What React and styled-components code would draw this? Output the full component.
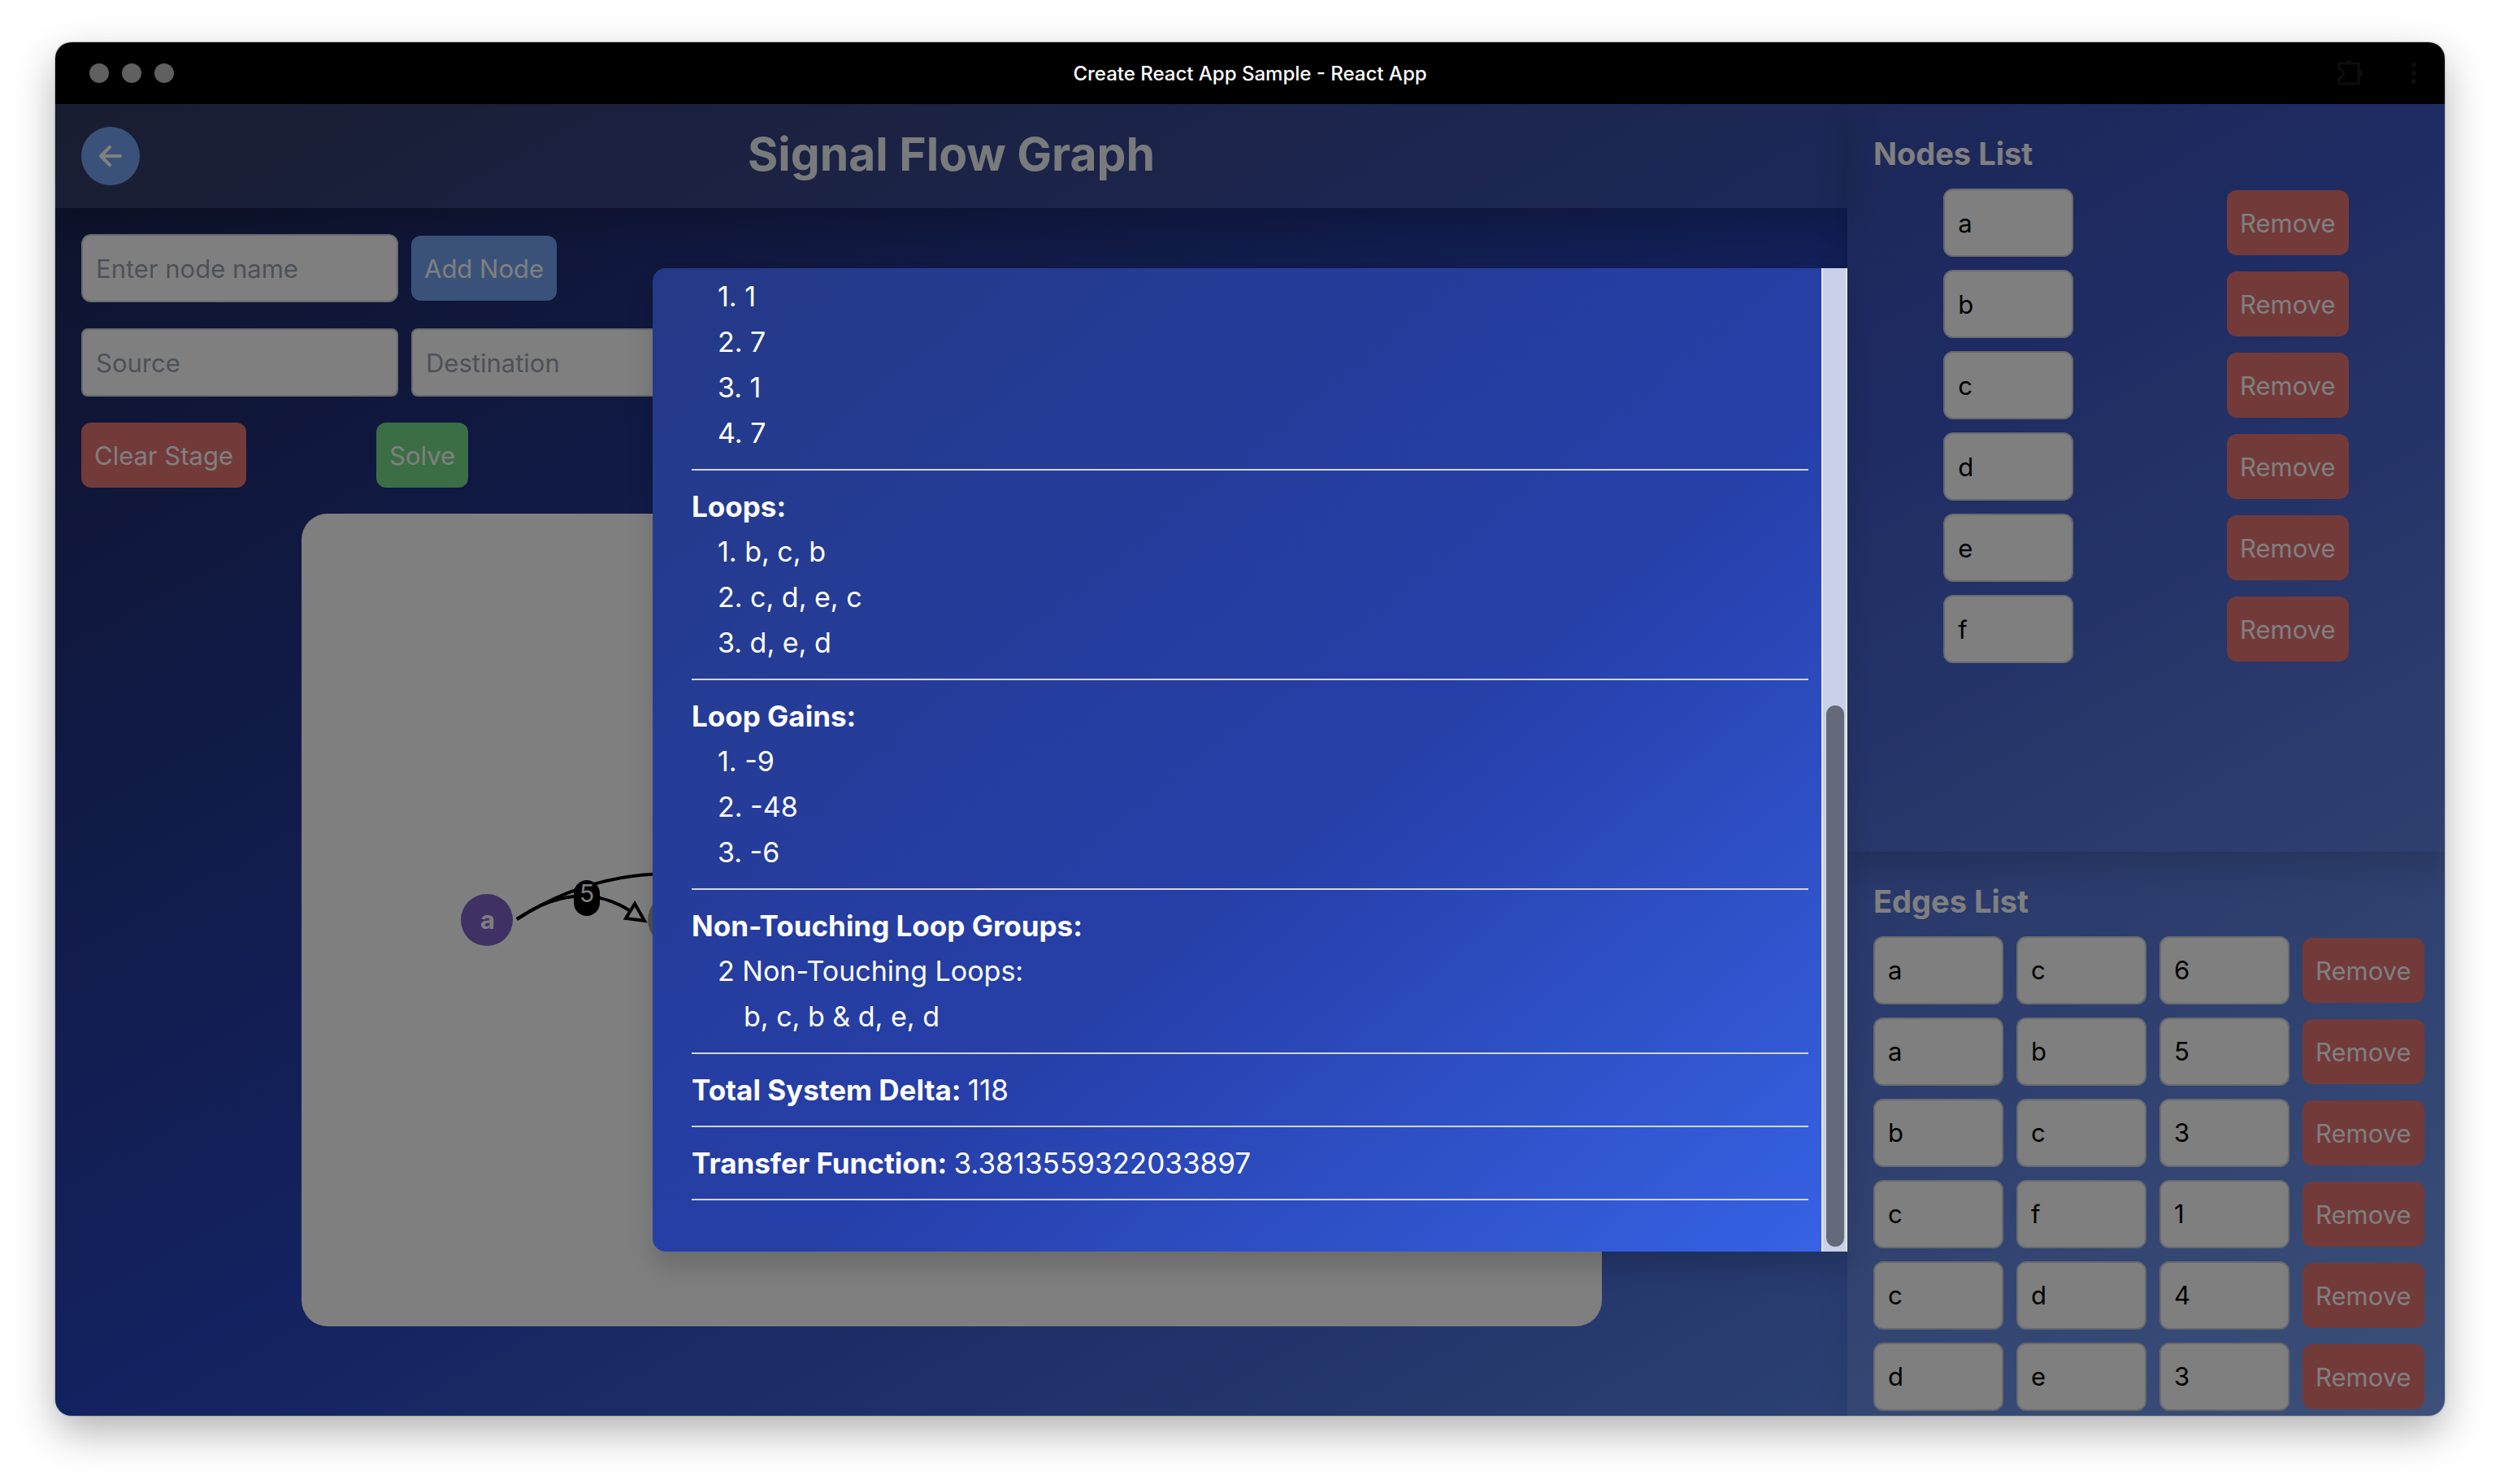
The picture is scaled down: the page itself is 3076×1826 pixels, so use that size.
import React from "react";
import styled, { createGlobalStyle } from "styled-components";

const GlobalStyle = createGlobalStyle`
  *, *::before, *::after { box-sizing: border-box; }
  body { margin: 0; background: #ffffff; }
  body, button, input { font-family: Inter, "Liberation Sans", sans-serif; }
  h1, h2, h3, p, ol, ul { margin: 0; padding: 0; font-size: inherit; }
`;

const Desktop = styled.div`
  display: flex;
  height: 100vh;
  padding: 52px 68px 84px;
`;

const Window = styled.div`
  flex: 1;
  display: flex;
  flex-direction: column;
  overflow: hidden;
  border-radius: 20px;
  box-shadow: 0 0 2px rgba(0, 0, 0, 0.5), 0 20px 50px rgba(0, 0, 0, 0.3);
`;

const TitleBar = styled.div`
  flex: none;
  display: grid;
  grid-template-columns: 1fr auto 1fr;
  align-items: center;
  height: 76px;
  padding: 0 32px;
  background: #000000;
  color: #ffffff;
  font-size: 24px;
  font-weight: 500;
`;

const Lights = styled.div`
  display: flex;
  gap: 16px;
  padding-left: 10px;
`;

const Light = styled.span`
  width: 24px;
  height: 24px;
  border-radius: 50%;
  background: #606060;
`;

const WindowTools = styled.div`
  display: flex;
  justify-content: flex-end;
  align-items: center;
  gap: 54px;
`;

const Viewport = styled.div`
  position: relative;
  flex: 1;
  min-height: 0;
  display: grid;
  grid-template-columns: 3fr 1fr;
  grid-template-rows: minmax(0, 1fr);
  background: linear-gradient(to bottom right, #1c2450, #2744c0 50%, #6896f0);
`;

const Main = styled.main`
  min-width: 0;
  display: flex;
  flex-direction: column;
`;

const Header = styled.header`
  display: grid;
  grid-template-columns: 72px 1fr 72px;
  align-items: center;
  height: 128px;
  padding: 0 32px;
  background: rgba(255, 255, 255, 0.1);
  box-shadow: 0 20px 40px rgba(0, 0, 0, 0.2);
`;

const Title = styled.h1`
  padding-bottom: 4px;
  text-align: center;
  color: #f3f4f6;
  font-size: 57px;
  line-height: 72px;
  font-weight: 700;
`;

const tones = { blue: "#74a4f2", red: "#e67474", green: "#78dc8a" };

const Button = styled.button`
  flex: none;
  height: 80px;
  padding: 2px 16px 0;
  border: 0;
  border-radius: 12px;
  background: ${(p) => tones[p.$tone]};
  color: #ffffff;
  font-size: 31px;
  line-height: 48px;
`;

const BackButton = styled(Button)`
  display: grid;
  place-items: center;
  height: 72px;
  padding: 0;
  border-radius: 50%;
`;

const TextBox = styled.input`
  flex: none;
  width: ${(p) => (p.$small ? 160 : 390)}px;
  height: 84px;
  padding: 0 16px;
  border: 2px solid #d1d5db;
  border-radius: ${(p) => (p.$square ? 8 : 12)}px;
  background: #ffffff;
  color: #000000;
  font-size: 31px;
  &::placeholder { color: #9ca3af; opacity: 1; }
`;

const Controls = styled.div`
  display: flex;
  flex-direction: column;
  gap: 32px;
  padding: 32px;
`;

const ControlRow = styled.div`
  display: flex;
  align-items: center;
  gap: ${(p) => (p.$wide ? 160 : 16)}px;
`;

const Stage = styled.section`
  flex: none;
  align-self: center;
  width: 1600px;
  max-width: 100%;
  height: 1000px;
  border-radius: 32px;
  background: #ffffff;
  overflow: hidden;
  svg { display: block; }
`;

const Sidebar = styled.aside`
  display: grid;
  grid-template-rows: minmax(0, 57fr) minmax(0, 43fr);
  background: rgba(255, 255, 255, 0.1);
  box-shadow: 0 20px 40px rgba(0, 0, 0, 0.08);
`;

const ListPanel = styled.section`
  overflow: hidden;
  padding: 32px;
  box-shadow: ${(p) => (p.$raised ? "0 20px 40px rgba(0, 0, 0, 0.15)" : "none")};
`;

const ListTitle = styled.h2`
  margin-bottom: 14px;
  color: #ffffff;
  font-size: 38px;
  line-height: 58px;
  font-weight: 700;
`;

const ListRow = styled.div`
  display: flex;
  align-items: center;
  justify-content: ${(p) => (p.$spread ? "space-around" : "flex-start")};
  gap: 16px;
  margin-bottom: 16px;
`;

const Backdrop = styled.div`
  position: absolute;
  inset: 0;
  display: flex;
  align-items: center;
  justify-content: center;
  background: rgba(0, 0, 0, 0.5);
`;

const Modal = styled.div`
  display: flex;
  width: 50%;
  height: 75%;
  overflow: hidden;
  border-radius: 16px 0 0 16px;
  background: linear-gradient(to bottom right, #243986, #263fa9 56%, #3763e6);
  box-shadow: 0 20px 30px rgba(0, 0, 0, 0.15);
  color: #ffffff;
  font-size: 34px;
  line-height: 56px;
`;

const Results = styled.div`
  flex: 1;
  display: flex;
  flex-direction: column;
  justify-content: flex-end;
  padding: 0 16px 47px 48px;
`;

const Result = styled.section`
  padding-bottom: 16px;
  border-bottom: 2px solid #d1d5db;
  margin-bottom: 16px;
`;

const ResultTitle = styled.h3`
  font-size: 35px;
  font-weight: 700;
`;

const Figure = styled.span`
  font-weight: 400;
`;

const Lines = styled.ul`
  padding-left: 32px;
  list-style: none;
`;

const ScrollTrack = styled.div`
  display: flex;
  flex-direction: column;
  justify-content: flex-end;
  width: 32px;
  padding: 6px 2px 6px 4px;
  border: solid #e4e6ee;
  border-width: 0 2px;
  background: #c9d0ea;
`;

const ScrollThumb = styled.div`
  height: calc(100% * 5 / 9);
  border-radius: 12px;
  background: #656a7a;
`;

const nodes = ["a", "b", "c", "d", "e", "f"];
const edges = [
  ["a", "c", "6"],
  ["a", "b", "5"],
  ["b", "c", "3"],
  ["c", "f", "1"],
  ["c", "d", "4"],
  ["d", "e", "3"],
];
const gains = ["1. 1", "2. 7", "3. 1", "4. 7"];
const results = [
  { title: "Loops:", lines: ["1. b, c, b", "2. c, d, e, c", "3. d, e, d"] },
  { title: "Loop Gains:", lines: ["1. -9", "2. -48", "3. -6"] },
];

function LineItems({ lines }) {
  return (
    <Lines>
      {lines.map((line) => (
        <li key={line}>{line}</li>
      ))}
    </Lines>
  );
}

function FlowGraph() {
  return (
    <svg width="1600" height="1000" viewBox="0 0 1600 1000">
      <circle cx="228" cy="500" r="32" fill="#7e62c6" />
      <text x="229" y="511" textAnchor="middle" fontSize="31" fontWeight="700" fill="#ffffff">a</text>
      <circle cx="458" cy="500" r="32" fill="#9ca3af" />
      <g fill="none" stroke="#000000" strokeWidth="4">
        <path d="M265 499 Q350 444 450 443" />
        <path d="M265 499 Q340 448 403 488" />
        <path d="M410 480 L399 498 L422 501 Z" fill="#ffffff" />
      </g>
      <rect x="335" y="451" width="32" height="44" rx="16" fill="#000000" />
      <text x="351" y="478" textAnchor="middle" fontSize="30" fill="#ffffff">5</text>
    </svg>
  );
}

export default function App() {
  return (
    <Desktop>
      <GlobalStyle />
      <Window>
        <TitleBar>
          <Lights>
            <Light />
            <Light />
            <Light />
          </Lights>
          <span>Create React App Sample - React App</span>
          <WindowTools>
            <svg width="36" height="36" viewBox="0 0 36 36">
              <path
                d="M4 6h24v25H4v-7a5 5 0 0 0 0-11z"
                fill="none"
                stroke="#0e0e0e"
                strokeWidth="3"
                strokeLinejoin="round"
              />
              <path d="M12 6a4 4 0 0 1 8 0zM29 14a4 4 0 0 1 0 9z" fill="#0e0e0e" />
            </svg>
            <svg width="12" height="32" viewBox="0 0 12 32" fill="#0e0e0e">
              <circle cx="6" cy="6" r="3" />
              <circle cx="6" cy="16" r="3" />
              <circle cx="6" cy="26" r="3" />
            </svg>
          </WindowTools>
        </TitleBar>
        <Viewport>
          <Main>
            <Header>
              <BackButton $tone="blue" aria-label="Back">
                <svg width="40" height="40" viewBox="0 0 40 40" fill="none" stroke="#ffffff" strokeWidth="4" strokeLinecap="round" strokeLinejoin="round">
                  <path d="M32 20H8M19 9L8 20l11 11" />
                </svg>
              </BackButton>
              <Title>Signal Flow Graph</Title>
            </Header>
            <Controls>
              <ControlRow>
                <TextBox placeholder="Enter node name" aria-label="Node name" />
                <Button $tone="blue">Add Node</Button>
              </ControlRow>
              <ControlRow>
                <TextBox $square placeholder="Source" aria-label="Source" />
                <TextBox $square placeholder="Destination" aria-label="Destination" />
              </ControlRow>
              <ControlRow $wide>
                <Button $tone="red">Clear Stage</Button>
                <Button $tone="green">Solve</Button>
              </ControlRow>
            </Controls>
            <Stage aria-label="Graph stage">
              <FlowGraph />
            </Stage>
          </Main>
          <Sidebar>
            <ListPanel $raised>
              <ListTitle>Nodes List</ListTitle>
              {nodes.map((name) => (
                <ListRow key={name} $spread>
                  <TextBox $small defaultValue={name} aria-label={`Node ${name}`} />
                  <Button $tone="red">Remove</Button>
                </ListRow>
              ))}
            </ListPanel>
            <ListPanel>
              <ListTitle>Edges List</ListTitle>
              {edges.map(([from, to, gain]) => (
                <ListRow key={from + to}>
                  <TextBox $small defaultValue={from} aria-label="From" />
                  <TextBox $small defaultValue={to} aria-label="To" />
                  <TextBox $small defaultValue={gain} aria-label="Gain" />
                  <Button $tone="red">Remove</Button>
                </ListRow>
              ))}
            </ListPanel>
          </Sidebar>
          <Backdrop>
            <Modal role="dialog" aria-label="Results">
              <Results>
                <Result>
                  <LineItems lines={gains} />
                </Result>
                {results.map(({ title, lines }) => (
                  <Result key={title}>
                    <ResultTitle>{title}</ResultTitle>
                    <LineItems lines={lines} />
                  </Result>
                ))}
                <Result>
                  <ResultTitle>Non-Touching Loop Groups:</ResultTitle>
                  <Lines>
                    <li>
                      2 Non-Touching Loops:
                      <LineItems lines={["b, c, b & d, e, d"]} />
                    </li>
                  </Lines>
                </Result>
                <Result>
                  <ResultTitle>
                    Total System Delta: <Figure>118</Figure>
                  </ResultTitle>
                </Result>
                <Result>
                  <ResultTitle>
                    Transfer Function: <Figure>3.3813559322033897</Figure>
                  </ResultTitle>
                </Result>
              </Results>
              <ScrollTrack>
                <ScrollThumb />
              </ScrollTrack>
            </Modal>
          </Backdrop>
        </Viewport>
      </Window>
    </Desktop>
  );
}
